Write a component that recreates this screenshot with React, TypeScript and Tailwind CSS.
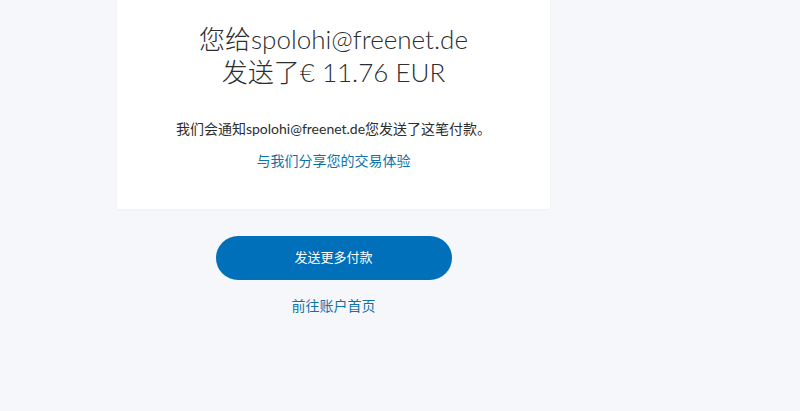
import React from "react";

const font = {
  fontFamily: '"Lato", "Noto Sans CJK SC", sans-serif',
};

const App: React.FC = () => {
  return (
    <div
      className="h-[411px] w-[800px] overflow-hidden bg-[#f5f7fa]"
      style={font}
    >
      <div className="ml-[117px] flex w-[433px] flex-col items-center">
        <div className="flex h-[209px] w-full flex-col items-center bg-white shadow-[0_0_2px_rgba(0,0,0,0.06)]">
          <h1 className="mt-[23px] text-center text-[26px] leading-[33px] font-light text-[#2c2e2f]">
            您给spolohi@freenet.de
            <br />
            发送了€ 11.76 EUR
          </h1>
          <p className="mt-[30px] text-[14px] leading-[20px] text-[#2c2e2f]">
            我们会通知spolohi@freenet.de您发送了这笔付款。
          </p>
          <a className="mt-[12px] text-[14px] leading-[20px] text-[#0f73a8]">
            与我们分享您的交易体验
          </a>
        </div>
        <button className="mt-[27px] h-[44px] w-[236px] rounded-full bg-[#0070ba] text-[13px] text-white">
          发送更多付款
        </button>
        <a className="mt-[16px] text-[14px] leading-[20px] text-[#0f73a8]">
          前往账户首页
        </a>
      </div>
    </div>
  );
};

export default App;
